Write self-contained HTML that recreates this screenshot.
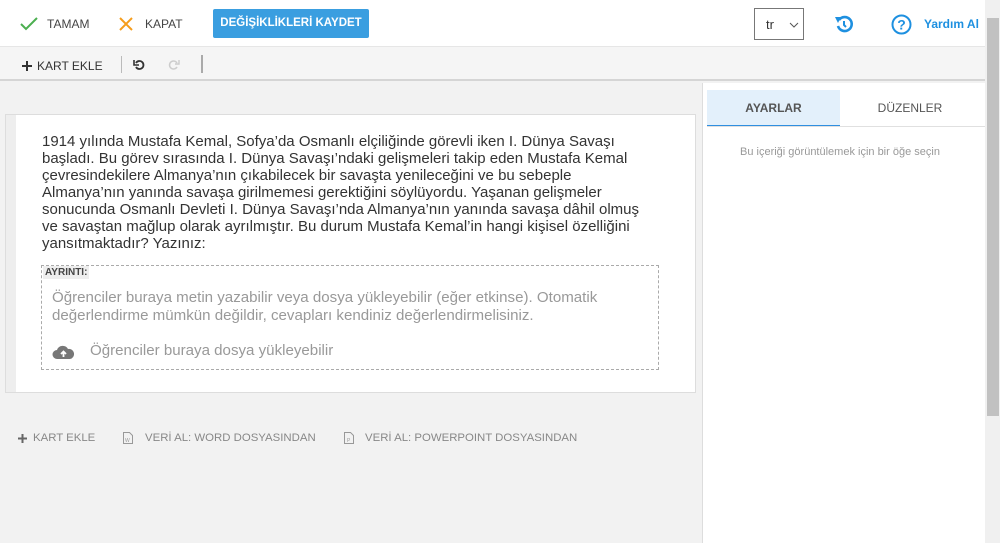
<!DOCTYPE html>
<html><head><meta charset="utf-8"><style>
*{box-sizing:border-box;margin:0;padding:0}
body{width:1000px;height:543px;overflow:hidden;font-family:"Liberation Sans",sans-serif;background:#f2f2f2;position:relative;color:#333}
.abs{position:absolute}
.top{left:0;top:0;width:985px;height:47px;background:#fff;border-bottom:1px solid #e6e6e6}
.tb{left:0;top:47px;width:985px;height:34px;background:#f5f5f5;border-bottom:2px solid #d5d5d5}
.t{font-size:12px;color:#444}
.scroll{left:985px;top:0;width:15px;height:543px;background:#f0f0f0}
.thumb{left:987px;top:18px;width:12px;height:398px;background:#c1c1c1}
.right{left:702px;top:83px;width:283px;height:460px;background:#fff;border-left:1px solid #ddd}
.card{left:5px;top:114px;width:691px;height:279px;background:#fff;border:1px solid #ddd}
.strip{left:6px;top:115px;width:10px;height:277px;background:#eee}
.q{left:42px;top:133px;width:650px;font-size:15px;line-height:17px;color:#333;white-space:nowrap}
.box{left:41px;top:265px;width:618px;height:105px;border:1px dashed #aaa}
.g{color:#999;font-size:15.1px}
.bot{font-size:11.4px;color:#888;top:432px}
</style></head><body>
<div class="abs top"></div>
<svg class="abs" style="left:19px;top:16px" width="20" height="16"><path d="M2 8l5 5L18 2" stroke="#4caf50" stroke-width="2" fill="none"/></svg>
<div class="abs t" style="left:47px;top:17px">TAMAM</div>
<svg class="abs" style="left:118px;top:16px" width="16" height="16"><path d="M2 2l12 12M14 2L2 14" stroke="#f59d1c" stroke-width="2"/></svg>
<div class="abs t" style="left:145px;top:17px">KAPAT</div>
<div class="abs" style="left:213px;top:9px;width:156px;height:29px;background:#3a9ee0;border-radius:2px;color:#fff;font-size:11.5px;font-weight:bold;text-align:center;line-height:29px">DEĞİŞİKLİKLERİ KAYDET</div>
<div class="abs" style="left:754px;top:8px;width:50px;height:32px;border:1px solid #777;background:#fff;font-size:13px;padding:8px 0 0 11px">tr<svg class="abs" style="left:34px;top:13px" width="10" height="6"><path d="M1 1l4 4 4-4" stroke="#555" fill="none"/></svg></div>
<svg class="abs" style="left:834px;top:14px" width="20" height="20" viewBox="0 0 20 20"><path d="M5 6a7 7 0 1 1-1 6" stroke="#1e90e0" stroke-width="2.6" fill="none"/><path d="M1 3l6 0-3 6z" fill="#1e90e0"/><path d="M10 7v4l2 2" stroke="#1e90e0" stroke-width="2" fill="none"/></svg>
<svg class="abs" style="left:891px;top:14px" width="21" height="21"><circle cx="10.5" cy="10.5" r="9" stroke="#1e90e0" stroke-width="2" fill="none"/><text x="10.5" y="15.5" font-size="14" font-weight="bold" text-anchor="middle" fill="#1e90e0" font-family="Liberation Sans">?</text></svg>
<div class="abs" style="left:924px;top:17px;font-size:12px;font-weight:bold;color:#1e90e0">Yardım Al</div>
<div class="abs tb"></div>
<svg class="abs" style="left:22px;top:61px" width="10" height="10"><path d="M5 0v10M0 5h10" stroke="#333" stroke-width="2"/></svg>
<div class="abs t" style="left:37px;top:59px;color:#333">KART EKLE</div>
<div class="abs" style="left:121px;top:56px;width:1px;height:17px;background:#bbb"></div>
<svg class="abs" style="left:133px;top:59px" width="12" height="12"><path d="M3 4a4 4 0 1 1 0 4" stroke="#333" stroke-width="1.8" fill="none"/><path d="M1 1v5h5" stroke="#333" stroke-width="1.6" fill="none"/></svg>
<svg class="abs" style="left:168px;top:59px" width="12" height="12"><path d="M9 4a4 4 0 1 0 0 4" stroke="#ccc" stroke-width="1.5" fill="none"/><path d="M11 1v4h-4" stroke="#ccc" stroke-width="1.4" fill="none"/></svg>
<div class="abs" style="left:201px;top:55px;width:2px;height:18px;background:#aaa"></div>
<div class="abs right"></div>
<div class="abs" style="left:707px;top:90px;width:133px;height:37px;background:#e3f0fb;border-bottom:2px solid #2f8fe0;text-align:center;line-height:36px;font-size:12px;font-weight:bold;color:#555">AYARLAR</div>
<div class="abs" style="left:840px;top:90px;width:140px;height:37px;text-align:center;line-height:36px;font-size:12px;color:#555">DÜZENLER</div>
<div class="abs" style="left:707px;top:126px;width:278px;height:1px;background:#e0e0e0"></div>
<div class="abs" style="left:740px;top:146px;font-size:11px;color:#999">Bu içeriği görüntülemek için bir öğe seçin</div>
<div class="abs scroll"></div><div class="abs thumb"></div>
<div class="abs card"></div><div class="abs strip"></div>
<div class="abs q">1914 yılında Mustafa Kemal, Sofya’da Osmanlı elçiliğinde görevli iken I. Dünya Savaşı<br>başladı. Bu görev sırasında I. Dünya Savaşı’ndaki gelişmeleri takip eden Mustafa Kemal<br>çevresindekilere Almanya’nın çıkabilecek bir savaşta yenileceğini ve bu sebeple<br>Almanya’nın yanında savaşa girilmemesi gerektiğini söylüyordu. Yaşanan gelişmeler<br>sonucunda Osmanlı Devleti I. Dünya Savaşı’nda Almanya’nın yanında savaşa dâhil olmuş<br>ve savaştan mağlup olarak ayrılmıştır. Bu durum Mustafa Kemal’in hangi kişisel özelliğini<br>yansıtmaktadır? Yazınız:</div>
<div class="abs box"></div>
<div class="abs" style="left:43px;top:266px;background:#eee;font-size:10px;font-weight:bold;color:#444;padding:1px 2px">AYRINTI:</div>
<div class="abs g" style="left:52px;top:289px;width:600px;line-height:17.5px;white-space:nowrap">Öğrenciler buraya metin yazabilir veya dosya yükleyebilir (eğer etkinse). Otomatik<br>değerlendirme mümkün değildir, cevapları kendiniz değerlendirmelisiniz.</div>
<svg class="abs" style="left:52px;top:344px" width="23" height="16"><path d="M5 15a4.5 4.5 0 0 1 0-9 6 6 0 0 1 11-1 5 5 0 0 1 2 10z" fill="#777"/><path d="M11.5 13V8M9 10l2.5-2.5L14 10" stroke="#fff" stroke-width="1.8" fill="none"/></svg>
<div class="abs g" style="left:90px;top:342px">Öğrenciler buraya dosya yükleyebilir</div>
<svg class="abs" style="left:18px;top:434px" width="9" height="9"><path d="M4.5 0v9M0 4.5h9" stroke="#666" stroke-width="2"/></svg>
<div class="abs bot" style="left:33px">KART EKLE</div>
<svg class="abs" style="left:123px;top:432px" width="10" height="12"><path d="M.5.5h6l3 3v8h-9z" stroke="#999" fill="none"/><text x="2" y="10" font-size="5" fill="#999">W</text></svg>
<div class="abs bot" style="left:145px">VERİ AL: WORD DOSYASINDAN</div>
<svg class="abs" style="left:344px;top:432px" width="10" height="12"><path d="M.5.5h6l3 3v8h-9z" stroke="#999" fill="none"/><text x="3" y="10" font-size="5" fill="#999">P</text></svg>
<div class="abs bot" style="left:365px">VERİ AL: POWERPOINT DOSYASINDAN</div>
</body></html>
